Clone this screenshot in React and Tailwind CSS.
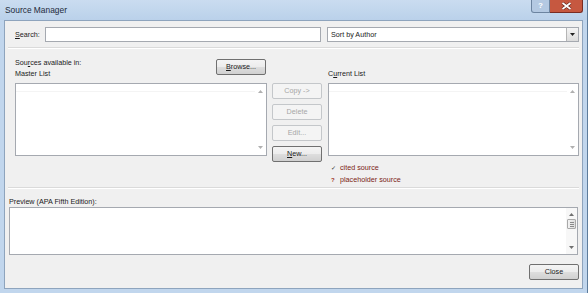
import React from "react";

const font = { fontFamily: '"Liberation Sans", Arial, sans-serif' };

function Btn({ children, disabled, className = "" }) {
  return (
    <div
      className={
        "flex items-center justify-center rounded-[2px] border text-[7.2px] leading-none " +
        (disabled
          ? "border-[#c4c7ca] bg-[#f4f4f4] text-[#a6a6a6] "
          : "border-[#707070] bg-[linear-gradient(to_bottom,#f4f4f4_0%,#ececec_50%,#dedede_50%,#d0d0d0_100%)] text-[#1a1a1a] ") +
        className
      }
    >
      {children}
    </div>
  );
}

function UpArrow({ c = "#8c8c8c" }) {
  return (
    <svg width="5" height="3" viewBox="0 0 5 3">
      <path d="M0 3 L2.5 0 L5 3 Z" fill={c} />
    </svg>
  );
}
function DownArrow({ c = "#8c8c8c" }) {
  return (
    <svg width="5" height="3" viewBox="0 0 5 3">
      <path d="M0 0 L5 0 L2.5 3 Z" fill={c} />
    </svg>
  );
}

function ListBox({ className = "" }) {
  return (
    <div className={"flex border border-[#a5a9b0] bg-white " + className}>
      <div className="flex-1 flex flex-col">
        <div className="h-[8px] border-b border-[#f4f4f4]" />
      </div>
      <div className="w-[11px] flex flex-col items-center justify-between py-[6px]">
        <UpArrow c="#b0b0b0" />
        <DownArrow c="#b0b0b0" />
      </div>
    </div>
  );
}

export default function App() {
  return (
    <div
      style={font}
      className="w-[588px] h-[293px] flex flex-col bg-[#c1d6ed] border-r border-[#5d7c9c] overflow-hidden text-[#1b1b1b]"
    >
      {/* Title bar */}
      <div className="h-[20px] shrink-0 flex items-start bg-[linear-gradient(to_bottom,#cadcf0,#bad1ea)]">
        <div className="pl-[5px] pt-[4px] text-[8.4px] leading-[12px] text-[#1e2a3a]">Source Manager</div>
        <div className="flex-1" />
        <div className="flex shrink-0 mr-[4px]">
          <div className="w-[19px] h-[13px] shrink-0 flex items-center justify-center rounded-bl-[3px] border border-t-0 border-[#6c84a0] bg-[#b4c9e2] text-[8px] font-bold text-white">
            ?
          </div>
          <div className="w-[33px] h-[13px] shrink-0 flex items-center justify-center rounded-br-[3px] border border-t-0 border-l-0 border-[#7a2c22] bg-[#c65840]">
            <svg width="11" height="8" viewBox="0 0 11 8">
              <path d="M1.5 1 L9.5 7 M9.5 1 L1.5 7" stroke="#5a1f16" strokeWidth="3" />
              <path d="M1.5 1 L9.5 7 M9.5 1 L1.5 7" stroke="#ffffff" strokeWidth="1.8" />
            </svg>
          </div>
        </div>
      </div>

      {/* Client area */}
      <div className="mx-[4px] h-[269px] shrink-0 flex flex-col border border-[#8ea4bd] bg-[#f0f0f0] text-[7.2px] leading-[11px]">
        {/* Search row */}
        <div className="mt-[6px] h-[15px] flex items-center pl-[10px] pr-[3px]">
          <div className="w-[30px]">
            <span className="underline">S</span>earch:
          </div>
          <div className="w-[276px] h-[15px] border border-[#a5a9b0] bg-white" />
          <div className="ml-[6px] flex-1 h-[15px] flex border border-[#a5a9b0] bg-white">
            <div className="flex-1 pl-[3px] flex items-center">Sort by Author</div>
            <div className="w-[12px] h-full border-l border-[#b5b5b5] flex items-center justify-center bg-[linear-gradient(to_bottom,#f4f4f4,#dcdcdc)]">
              <DownArrow c="#202020" />
            </div>
          </div>
        </div>

        {/* Separator */}
        <div className="mt-[5px] mx-[3px] h-[2px] border-t border-[#dadada] border-b border-b-white" />

        {/* Lists section */}
        <div className="mt-[8px] flex">
          {/* Left column */}
          <div className="ml-[10px] w-[252px] flex flex-col">
            <div className="h-[22px] flex">
              <div className="flex-1 flex flex-col">
                <div>
                  Sou<span className="underline">r</span>ces available in:
                </div>
                <div>Master List</div>
              </div>
              <Btn className="mt-[2px] w-[50px] h-[16px] mr-[1px]">
                <span className="underline">B</span>rowse...
              </Btn>
            </div>
            <ListBox className="mt-[4px] h-[73px]" />
          </div>

          {/* Middle buttons */}
          <div className="ml-[5px] w-[50px] pt-[26px] flex flex-col gap-[5px]">
            <Btn disabled className="h-[16px]">Copy -&gt;</Btn>
            <Btn disabled className="h-[16px]">Delete</Btn>
            <Btn disabled className="h-[16px]">Edit...</Btn>
            <Btn className="h-[16px]">
              <span className="underline">N</span>ew...
            </Btn>
          </div>

          {/* Right column */}
          <div className="ml-[6px] w-[251px] flex flex-col">
            <div className="h-[22px] flex flex-col justify-end">
              <div>
                C<span className="underline">u</span>rrent List
              </div>
            </div>
            <ListBox className="mt-[4px] h-[73px]" />
            <div className="mt-[6px] flex flex-col text-[#7c1e14] leading-[12px]">
              <div className="flex items-center">
                <span className="w-[12px] pl-[3px] text-[6px] text-[#333]">✓</span>
                cited source
              </div>
              <div className="flex items-center">
                <span className="w-[12px] pl-[3px] text-[6px] font-bold text-[#a03a2a]">?</span>
                placeholder source
              </div>
            </div>
          </div>
        </div>

        {/* Separator */}
        <div className="mt-[1px] mx-[3px] h-[2px] border-t border-[#dadada] border-b border-b-white" />

        {/* Preview */}
        <div className="mt-[7px] pl-[4px]">Preview (APA Fifth Edition):</div>
        <div className="mx-[4px] h-[48px] flex border border-[#a5a9b0] bg-white">
          <div className="flex-1" />
          <div className="w-[11px] flex flex-col items-center bg-[#f7f7f7] pt-[5px] pb-[5px]">
            <UpArrow c="#707070" />
            <div className="mt-[3px] w-[9px] h-[10px] rounded-[1px] border border-[#a9a9a9] bg-[linear-gradient(to_right,#f2f2f2,#dedede)] flex flex-col items-center justify-center gap-[1px]">
              <div className="w-[4px] h-px bg-[#8a8a8a]" />
              <div className="w-[4px] h-px bg-[#8a8a8a]" />
              <div className="w-[4px] h-px bg-[#8a8a8a]" />
            </div>
            <div className="flex-1" />
            <DownArrow c="#707070" />
          </div>
        </div>

        {/* Close */}
        <div className="mt-[9px] flex justify-end pr-[3px]">
          <Btn className="w-[50px] h-[16px]">Close</Btn>
        </div>
      </div>
    </div>
  );
}
